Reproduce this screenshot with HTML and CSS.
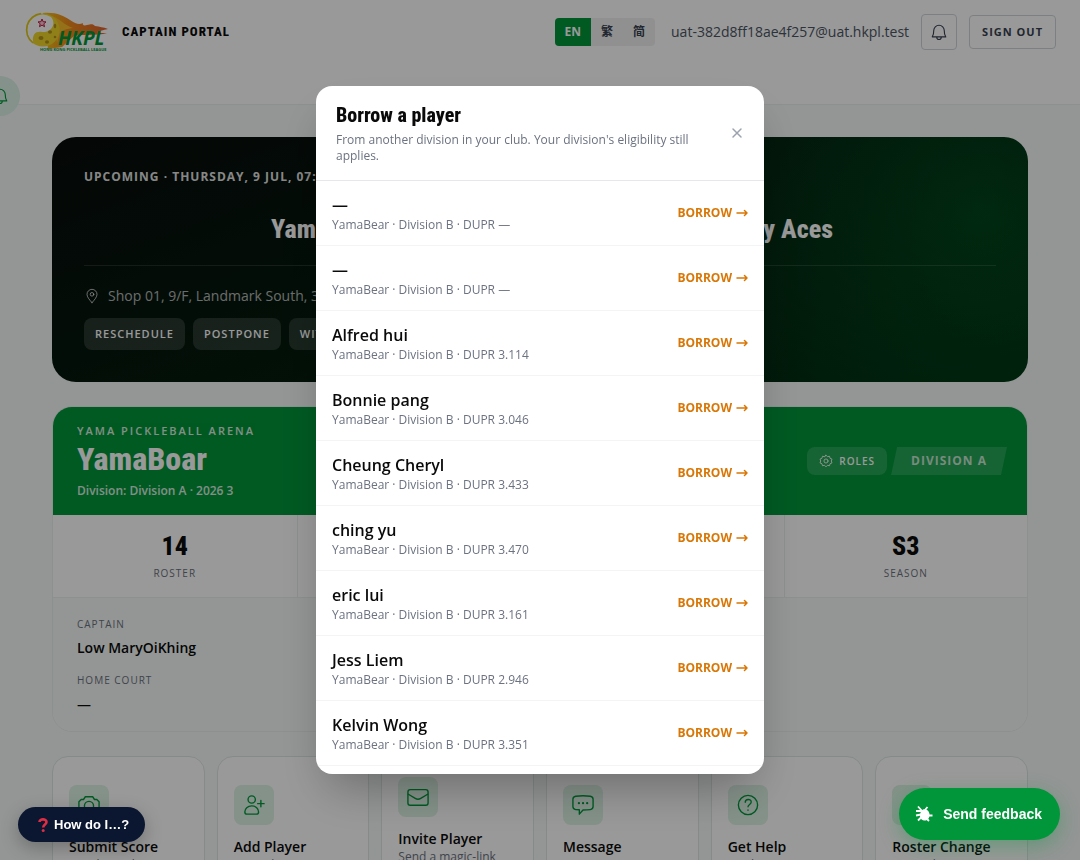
FILE: index.html
```
<!DOCTYPE html>
<html lang="en">
<head>
    <meta charset="UTF-8">
    <meta name="viewport" content="width=device-width, initial-scale=1.0">
    <title>Captain Portal</title>
    <link rel="stylesheet" href="styles.css">
</head>
<body>

    <!-- Header -->
    <header class="site-header">
        <div class="header-bar">
            <a class="brand" href="#">
                <svg class="logo" viewBox="0 0 86 42" aria-hidden="true">
                    <defs>
                        <linearGradient id="flame" x1="0" y1="0" x2="1" y2="0">
                            <stop offset="0" stop-color="#f4c21c"/>
                            <stop offset="0.4" stop-color="#f08a1a"/>
                            <stop offset="1" stop-color="#e2602f"/>
                        </linearGradient>
                    </defs>
                    <path d="M19 2c14-1 20 3 27 7 6 4 9 5 13 3-1 2 1 3 4 2 5-1 6-1 8 1 5 1 8 1 13 3-6 1-7 2-11 3 3 1 6 1 10 1-10 3-26 1-33 3L38 36 24 38Z" fill="url(#flame)"/>
                    <path d="M28 5c8 3 12 9 21 12-6 1-10 1-13 5l-3 10" fill="#f8bf2c"/>
                    <circle cx="19" cy="19" r="16.500" fill="#f0d62a"/>
                    <path d="M18 3.500A15.500 15.500 0 0 0 9 31C8 23 12 20 18 21c9 1 15-8 9-15A15.500 15.500 0 0 0 18 3.500Z" fill="#fff"/>
                    <path d="M17 2.500A16.500 16.500 0 0 0 9 32" fill="none" stroke="#e0c91c" stroke-width="1.500"/>
                    <g fill="#b4951a">
                        <ellipse cx="17" cy="27" rx="2.500" ry="2"/>
                        <ellipse cx="26" cy="21" rx="2" ry="1.800"/>
                        <ellipse cx="23" cy="31" rx="2" ry="1.800"/>
                        <ellipse cx="31" cy="15" rx="1.300" ry="2.200"/>
                        <circle cx="31" cy="26" r="1.300"/>
                    </g>
                    <path d="M18 8l1.100 2.700 2.900.2-2.200 1.900.7 2.900-2.500-1.600-2.500 1.600.7-2.900-2.200-1.900 2.900-.2Z" fill="#f7c6d3" stroke="#c4153f" stroke-width="1"/>
                    <text class="logo-name" x="34" y="34">HKPL</text>
                    <text class="logo-tag" x="16" y="40">HONG KONG PICKLEBALL LEAGUE</text>
                </svg>
                <span class="brand-title">CAPTAIN PORTAL</span>
            </a>
            <div class="header-tools">
                <div class="lang-switch">
                    <button type="button" class="lang active">EN</button>
                    <button type="button" class="lang">繁</button>
                    <button type="button" class="lang">简</button>
                </div>
                <span class="user-email">uat-382d8ff18ae4f257@uat.hkpl.test</span>
                <div class="header-buttons">
                    <button type="button" class="bell-button" aria-label="Notifications">
                        <svg viewBox="0 0 24 24" class="icon"><path d="M3 18.500h18c-1.500-2-2-4-2-8.500a7 7 0 0 0-14 0c0 4.500-.5 6.500-2 8.500ZM9 18.500v.5a3 3 0 0 0 6 0v-.5"/></svg>
                    </button>
                    <button type="button" class="signout-button">SIGN OUT</button>
                </div>
            </div>
        </div>
    </header>

    <button type="button" class="side-bell" aria-label="Alerts">
        <svg viewBox="0 0 24 24" class="icon"><path d="M3 18.500h18c-1.500-2-2-4-2-8.500a7 7 0 0 0-14 0c0 4.500-.5 6.500-2 8.500ZM9 18.500v.5a3 3 0 0 0 6 0v-.5"/></svg>
    </button>

    <main class="container">

        <!-- Upcoming match -->
        <section class="match-card">
            <p class="match-date">UPCOMING · THURSDAY, 9 JUL, 07:00</p>
            <h2 class="match-teams"><span>YamaBoar</span><span>Bay Aces</span></h2>
            <p class="match-place">
                <svg viewBox="0 0 24 24" class="icon"><path d="M12 22c4-4.500 7.500-8.500 7.500-12.500a7.500 7.500 0 0 0-15 0C4.500 13.500 8 17.500 12 22Z"/><circle cx="12" cy="9.500" r="2.700"/></svg>
                Shop 01, 9/F, Landmark South, 39
            </p>
            <div class="match-actions">
                <button type="button">RESCHEDULE</button>
                <button type="button">POSTPONE</button>
                <button type="button">WITHDRAW</button>
            </div>
        </section>

        <!-- Team -->
        <section class="team-card">
            <div class="team-head">
                <div>
                    <p class="team-club">YAMA PICKLEBALL ARENA</p>
                    <h1>YamaBoar</h1>
                    <p class="team-division">Division: Division A · 2026 3</p>
                </div>
                <div class="team-tags">
                    <button type="button" class="roles-button">
                        <svg viewBox="0 0 24 24" class="icon"><path d="M12 2l2.500 2.600 3.500-.7 1 3.500 3.300 1.400L21 12l1.300 3.200L19 16.600l-1 3.500-3.500-.7L12 22l-2.500-2.600-3.500.7-1-3.500-3.300-1.400L3 12 1.700 8.800 5 7.400l1-3.500 3.500.7Z"/><circle cx="12" cy="12" r="3.500"/></svg>
                        ROLES
                    </button>
                    <span class="division-tag">DIVISION A</span>
                </div>
            </div>
            <div class="team-stats">
                <div><strong>14</strong><span>ROSTER</span></div>
                <div></div>
                <div></div>
                <div><strong>S3</strong><span>SEASON</span></div>
            </div>
            <dl class="team-info">
                <dt>CAPTAIN</dt>
                <dd>Low MaryOiKhing</dd>
                <dt>HOME COURT</dt>
                <dd>—</dd>
            </dl>
        </section>

        <!-- Quick actions -->
        <nav class="actions">
            <a class="action" href="#">
                <span class="tile"><svg viewBox="0 0 24 24" class="icon"><path d="M8 3h8l2 3h2.500L23 8.500V20H1V8.500L3.500 6H6Z"/><circle cx="12" cy="13" r="5"/></svg></span>
                <b>Submit Score</b>
                <small>Match results</small>
            </a>
            <a class="action" href="#">
                <span class="tile"><svg viewBox="0 0 24 24" class="icon"><circle cx="9.500" cy="6" r="4"/><path d="M9.500 13C5 13 2 16 2 19.500c0 1.500 1 2.500 2.500 2.500h10c1.500 0 2.500-1 2.500-2.500C17 16 14 13 9.500 13ZM19.500 7v7M16 10.500h7"/></svg></span>
                <b>Add Player</b>
                <small>Grow the roster</small>
            </a>
            <a class="action" href="#">
                <span class="tile"><svg viewBox="0 0 24 24" class="icon"><rect x="1" y="4" width="22" height="17" rx="2.500"/><path d="M1.500 9l7.500 4.500c2 1.200 4 1.200 6 0L22.500 9"/></svg></span>
                <b>Invite Player</b>
                <small>Send a magic-link invitation</small>
            </a>
            <a class="action" href="#">
                <span class="tile"><svg viewBox="0 0 24 24" class="icon"><path d="M4 2.500C9 1.700 15 1.700 20 2.500c2 .3 3 1.500 3 3.200v8c0 1.800-1 3-3 3.300-3 .4-5 .5-8 .5L8 22v-4.800L4 17c-2-.3-3-1.500-3-3.300v-8c0-1.700 1-2.900 3-3.200Z"/><path d="M7.500 10h.1M12 10h.1M16.500 10h.1" class="dots"/></svg></span>
                <b>Message</b>
                <small>Write to HKPL</small>
            </a>
            <a class="action" href="#">
                <span class="tile"><svg viewBox="0 0 24 24" class="icon"><circle cx="12" cy="12" r="10.500"/><path d="M9 9c0-4 6.500-4 6.500-.3 0 2.600-3.500 2.800-3.500 5.300M12 17.300v.4"/></svg></span>
                <b>Get Help</b>
                <small>Guides</small>
            </a>
            <a class="action" href="#">
                <span class="tile"><svg viewBox="0 0 24 24" class="icon"><path d="M3 8h17l-4-4M21 16H4l4 4"/></svg></span>
                <b>Roster Change</b>
                <small>Swap players</small>
            </a>
        </nav>
    </main>

    <!-- Borrow dialog -->
    <div class="overlay">
        <div class="modal" role="dialog" aria-modal="true" aria-labelledby="modal-title">
            <div class="modal-head">
                <div>
                    <h2 id="modal-title">Borrow a player</h2>
                    <p>From another division in your club. Your division's eligibility still applies.</p>
                </div>
                <button type="button" class="close-button" aria-label="Close">
                    <svg viewBox="0 0 14 14" class="icon"><path d="M3 3l8 8M11 3l-8 8"/></svg>
                </button>
            </div>
            <ul class="player-list">
                <li><button type="button" class="player"><span><b>—</b><small>YamaBear · Division B · DUPR —</small></span><span class="borrow">BORROW <svg viewBox="0 0 12 10" class="icon"><path d="M1 5h10M8.500 2.500L11 5 8.500 7.500"/></svg></span></button></li>
                <li><button type="button" class="player"><span><b>—</b><small>YamaBear · Division B · DUPR —</small></span><span class="borrow">BORROW <svg viewBox="0 0 12 10" class="icon"><path d="M1 5h10M8.500 2.500L11 5 8.500 7.500"/></svg></span></button></li>
                <li><button type="button" class="player"><span><b>Alfred hui</b><small>YamaBear · Division B · DUPR 3.114</small></span><span class="borrow">BORROW <svg viewBox="0 0 12 10" class="icon"><path d="M1 5h10M8.500 2.500L11 5 8.500 7.500"/></svg></span></button></li>
                <li><button type="button" class="player"><span><b>Bonnie pang</b><small>YamaBear · Division B · DUPR 3.046</small></span><span class="borrow">BORROW <svg viewBox="0 0 12 10" class="icon"><path d="M1 5h10M8.500 2.500L11 5 8.500 7.500"/></svg></span></button></li>
                <li><button type="button" class="player"><span><b>Cheung Cheryl</b><small>YamaBear · Division B · DUPR 3.433</small></span><span class="borrow">BORROW <svg viewBox="0 0 12 10" class="icon"><path d="M1 5h10M8.500 2.500L11 5 8.500 7.500"/></svg></span></button></li>
                <li><button type="button" class="player"><span><b>ching yu</b><small>YamaBear · Division B · DUPR 3.470</small></span><span class="borrow">BORROW <svg viewBox="0 0 12 10" class="icon"><path d="M1 5h10M8.500 2.500L11 5 8.500 7.500"/></svg></span></button></li>
                <li><button type="button" class="player"><span><b>eric lui</b><small>YamaBear · Division B · DUPR 3.161</small></span><span class="borrow">BORROW <svg viewBox="0 0 12 10" class="icon"><path d="M1 5h10M8.500 2.500L11 5 8.500 7.500"/></svg></span></button></li>
                <li><button type="button" class="player"><span><b>Jess Liem</b><small>YamaBear · Division B · DUPR 2.946</small></span><span class="borrow">BORROW <svg viewBox="0 0 12 10" class="icon"><path d="M1 5h10M8.500 2.500L11 5 8.500 7.500"/></svg></span></button></li>
                <li><button type="button" class="player"><span><b>Kelvin Wong</b><small>YamaBear · Division B · DUPR 3.351</small></span><span class="borrow">BORROW <svg viewBox="0 0 12 10" class="icon"><path d="M1 5h10M8.500 2.500L11 5 8.500 7.500"/></svg></span></button></li>
            </ul>
        </div>
    </div>

    <button type="button" class="help-float">
        <svg viewBox="0 0 10 14" aria-hidden="true"><path d="M1.500 4C1.500 .5 8.500 .5 8.500 4c0 2.500-3.300 2.500-3.300 5.500" fill="none" stroke="#dd2e44" stroke-width="2.600"/><circle cx="5.200" cy="12.400" r="1.500" fill="#dd2e44"/></svg>
        How do I…?
    </button>
    <button type="button" class="feedback-float">
        <svg viewBox="0 0 18 18" aria-hidden="true"><path d="M3 1.500L8 7M12.500 2L10 5M1 6h5M11 10.500h6.500M3 15.500l4-4M1 10.500l5-1M14 16l-3-3" stroke="#fff" stroke-width="1.800" fill="none"/><path d="M8 4.500c4-1 6.500 2 6.500 5.500 0 3-2 5.500-4.500 5.500-3 0-5-2-5-5 0-2.500 1-5 3-6Z" fill="#fff"/></svg>
        Send feedback
    </button>

</body>
</html>
```
FILE: styles.css
```
* {
    box-sizing: border-box;
}

body {
    margin: 0;
    font-family: "Open Sans", "Noto Sans CJK TC", sans-serif;
    font-size: 14px;
    line-height: 20px;
    color: #0a0a0a;
    background-color: #f6faf8;
    overflow: hidden;
}

h1, h2, p, ul, dl, dd {
    margin: 0;
    padding: 0;
}

ul {
    list-style: none;
}

a {
    color: inherit;
    text-decoration: none;
}

button {
    font: inherit;
    cursor: pointer;
    border: none;
    padding: 0;
}

.icon {
    display: block;
    fill: none;
    stroke: currentColor;
    stroke-width: 1.5;
    stroke-linecap: round;
    stroke-linejoin: round;
}

/* Header */
.site-header {
    background-color: #fff;
    border-bottom: 1px solid #eaf2ef;
    padding: 0 24px 40px;
}

.header-bar {
    display: flex;
    align-items: center;
    justify-content: space-between;
    height: 64px;
}

.brand {
    display: flex;
    align-items: center;
    gap: 12px;
}

.logo {
    width: 86px;
    height: 42px;
}

.logo-name {
    font: italic bold 19px "Open Sans", sans-serif;
    fill: #009639;
}

.logo-tag {
    font: bold 4px "Open Sans", sans-serif;
    fill: #009639;
}

.brand-title,
.match-teams,
.team-head h1,
.team-stats strong,
.modal-head h2 {
    font-family: "Roboto Condensed", "Open Sans Condensed", Roboto, sans-serif;
    font-weight: 800;
}

.brand-title {
    font-size: 13px;
    letter-spacing: 1px;
}

.header-tools {
    display: flex;
    align-items: center;
    gap: 16px;
}

.header-buttons {
    display: flex;
    align-items: center;
    gap: 12px;
    margin-left: -4px;
}

.lang-switch {
    display: flex;
    background-color: #f1f1f0;
    border-radius: 4px;
    overflow: hidden;
}

.lang {
    height: 28px;
    padding: 0 10px;
    font-size: 12px;
    font-weight: 700;
    color: #374151;
    background: none;
}

.lang.active {
    color: #fff;
    background-color: #009639;
}

.user-email {
    color: #4b5563;
}

.bell-button,
.signout-button {
    color: #374151;
    background: none;
    border: 1px solid #d1d5db;
    border-radius: 4px;
}

.bell-button {
    width: 36px;
    height: 36px;
    padding: 8px;
}

.signout-button {
    height: 34px;
    padding: 0 12px;
    font-size: 11px;
    font-weight: 700;
    letter-spacing: 1px;
}

.side-bell {
    position: fixed;
    left: -20px;
    top: 76px;
    width: 40px;
    height: 40px;
    padding: 11px;
    border-radius: 50%;
    color: #009639;
    background-color: #dcf3e8;
}

/* Page */
.container {
    display: flex;
    flex-direction: column;
    gap: 24px;
    max-width: 1040px;
    margin: 0 auto;
    padding: 32px;
}

/* Upcoming match */
.match-card {
    padding: 32px;
    color: #fff;
    background: radial-gradient(circle at 95% 30%, rgba(0, 150, 57, 0.3), transparent 36%), linear-gradient(160deg, #080c0b, #00280f);
    border-radius: 24px;
}

.match-date {
    font-size: 12px;
    font-weight: 700;
    line-height: 16px;
    letter-spacing: 1px;
    color: rgba(255, 255, 255, 0.9);
}

.match-teams {
    display: flex;
    justify-content: center;
    gap: 360px;
    margin-top: 28px;
    padding: 0 0 20px 24px;
    font-size: 26px;
    line-height: 32px;
    border-bottom: 1px solid rgba(255, 255, 255, 0.12);
}

.match-place {
    display: flex;
    align-items: center;
    gap: 8px;
    margin: 20px 0 12px;
    color: rgba(255, 255, 255, 0.7);
}

.match-place .icon {
    width: 16px;
    height: 16px;
}

.match-actions {
    display: flex;
    gap: 8px;
}

.match-actions button {
    height: 32px;
    padding: 0 11px;
    font-size: 11px;
    font-weight: 600;
    letter-spacing: 1px;
    color: #fff;
    background-color: rgba(255, 255, 255, 0.14);
    border-radius: 8px;
}

/* Team */
.team-card {
    background-color: #fff;
    border: 1px solid #eaf0ee;
    border-radius: 20px;
    overflow: hidden;
}

.team-head {
    display: flex;
    align-items: center;
    justify-content: space-between;
    padding: 16px 24px;
    color: #fff;
    background-color: #009639;
}

.team-head p {
    font-size: 12px;
    font-weight: 600;
    line-height: 16px;
    opacity: 0.85;
}

.team-head .team-club {
    font-size: 11px;
    letter-spacing: 2px;
}

.team-head h1 {
    margin-bottom: 4px;
    font-size: 32px;
    line-height: 40px;
}

.team-tags {
    display: flex;
    gap: 8px;
}

.roles-button {
    display: flex;
    align-items: center;
    gap: 6px;
    height: 28px;
    padding: 0 12px;
    font-size: 10px;
    font-weight: 600;
    letter-spacing: 1px;
    color: #fff;
    background-color: rgba(255, 255, 255, 0.15);
    border-radius: 8px;
}

.roles-button .icon {
    width: 14px;
    height: 14px;
}

.division-tag {
    margin: 0 -4px;
    padding: 0 20px;
    font-size: 12px;
    font-weight: 700;
    line-height: 28px;
    letter-spacing: 1px;
    color: rgba(255, 255, 255, 0.75);
    background-color: rgba(255, 255, 255, 0.15);
    clip-path: polygon(6px 0, 100% 0, calc(100% - 6px) 100%, 0 100%);
}

.team-stats {
    display: grid;
    grid-template-columns: repeat(4, 1fr);
    border-bottom: 1px solid #eaf0ee;
}

.team-stats div {
    display: flex;
    flex-direction: column;
    gap: 4px;
    align-items: center;
    padding: 16px;
}

.team-stats div + div {
    border-left: 1px solid #eaf0ee;
}

.team-stats strong {
    font-size: 26px;
    line-height: 30px;
}

.team-stats span,
.team-info dt {
    font-size: 10px;
    line-height: 16px;
    letter-spacing: 1px;
    color: #6b7280;
}

.team-info {
    padding: 18px 24px 17px;
    background-color: #f6faf8;
}

.team-info dd {
    margin-top: 6px;
    font-weight: 600;
}

.team-info dd + dt {
    margin-top: 14px;
}

/* Quick actions */
.actions {
    display: grid;
    grid-template-columns: repeat(6, 1fr);
    gap: 12px;
}

.action {
    display: flex;
    flex-direction: column;
    justify-content: center;
    padding: 20px 16px;
    background-color: #fff;
    border: 1px solid #dce8e4;
    border-radius: 16px;
}

.tile {
    width: 40px;
    height: 40px;
    margin-bottom: 12px;
    padding: 9px;
    color: #009639;
    background-color: #dcf3e5;
    border-radius: 8px;
}

.action b {
    font-weight: 600;
    white-space: nowrap;
}

.action small {
    font-size: 12px;
    line-height: 16px;
    color: #6b7280;
}

.dots {
    stroke-width: 2.4;
}

/* Borrow dialog */
.overlay {
    position: fixed;
    inset: 0;
    display: flex;
    align-items: center;
    justify-content: center;
    padding: 16px;
    background-color: rgba(0, 0, 0, 0.4);
}

.modal {
    display: flex;
    flex-direction: column;
    width: 100%;
    max-width: 448px;
    max-height: 80vh;
    background-color: #fff;
    border-radius: 16px;
    box-shadow: 0 24px 48px -12px rgba(0, 0, 0, 0.3);
    overflow: hidden;
}

.modal-head {
    display: flex;
    align-items: center;
    justify-content: space-between;
    gap: 16px;
    padding: 16px 20px;
    border-bottom: 1px solid #e5e7eb;
}

.modal-head h2 {
    margin-bottom: 4px;
    font-size: 20px;
    line-height: 26px;
}

.modal-head p {
    font-size: 12px;
    line-height: 16px;
    color: #6b7280;
}

.close-button {
    color: #9ca3af;
    background: none;
}

.close-button .icon {
    width: 14px;
    height: 14px;
}

.player-list {
    padding-bottom: 8px;
    overflow: auto;
    scrollbar-width: none;
}

.player {
    display: flex;
    align-items: center;
    justify-content: space-between;
    width: 100%;
    padding: 12px 16px;
    text-align: left;
    color: inherit;
    background: none;
    border-bottom: 1px solid #f3f4f6;
}

.player b {
    display: block;
    font-size: 16px;
    font-weight: 600;
    line-height: 24px;
}

.player small {
    display: block;
    font-size: 12px;
    line-height: 16px;
    color: #6b7280;
}

.borrow {
    display: flex;
    align-items: center;
    gap: 4px;
    font-size: 12px;
    font-weight: 700;
    color: #d97706;
}

.borrow .icon {
    width: 12px;
    height: 10px;
}

/* Floating buttons */
.help-float,
.feedback-float {
    position: fixed;
    display: flex;
    align-items: center;
    font-family: "Liberation Sans", Arial, sans-serif;
    font-weight: 700;
    color: #fff;
    border-radius: 26px;
}

.help-float {
    left: 18px;
    bottom: 18px;
    gap: 6px;
    height: 35px;
    padding: 0 16px 0 20px;
    font-size: 13px;
    background-color: #0b1730;
    box-shadow: 0 6px 18px rgba(0, 0, 0, 0.25);
}

.help-float svg {
    width: 10px;
    height: 14px;
}

.feedback-float {
    right: 20px;
    bottom: 20px;
    gap: 10px;
    height: 52px;
    padding: 0 18px 0 16px;
    font-size: 14px;
    background-color: #009639;
    box-shadow: 0 6px 20px rgba(0, 150, 57, 0.35);
}

.feedback-float svg {
    width: 18px;
    height: 18px;
}
```
